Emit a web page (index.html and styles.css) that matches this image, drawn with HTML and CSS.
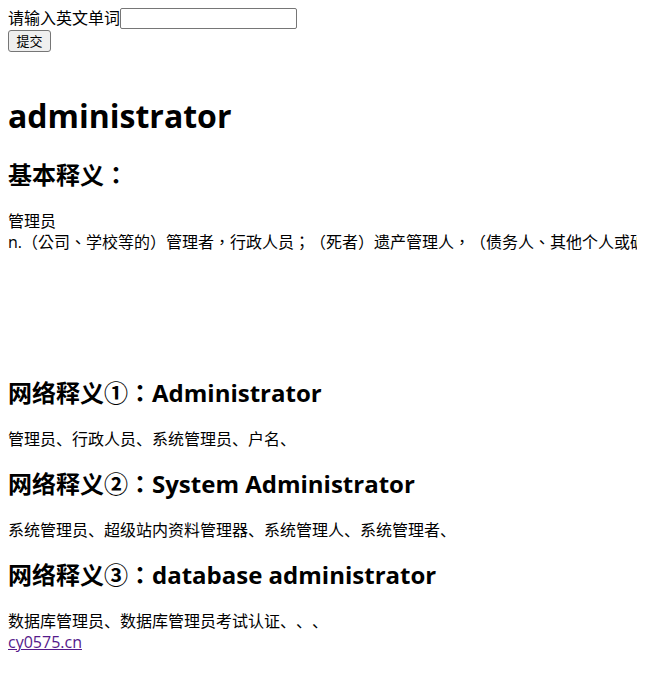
FILE: index.html
```html
<!DOCTYPE html>
<html>
<head>
<meta charset="utf-8">
<title>administrator</title>
<link rel="stylesheet" href="styles.css">
</head>
<body>
<form class="search">
  <div class="search-row">请输入英文单词<input class="word-input" type="text" name="word"></div>
  <button class="submit-btn" type="submit">提交</button>
</form>
<h1 class="word">administrator</h1>
<h2 class="section-title first">基本释义：</h2>
<p class="basic">管理员<br><span class="basic-line">n.（公司、学校等的）管理者，行政人员；（死者）遗产管理人，（债务人、其他个人或破产企业的）财产管理人</span></p>
<h2 class="section-title">网络释义①：Administrator</h2>
<p class="net">管理员、行政人员、系统管理员、户名、</p>
<h2 class="section-title">网络释义②：System Administrator</h2>
<p class="net">系统管理员、超级站内资料管理器、系统管理人、系统管理者、</p>
<h2 class="section-title">网络释义③：database administrator</h2>
<p class="net last">数据库管理员、数据库管理员考试认证、、、<br><a class="site-link" href="#">cy0575.cn</a></p>
</body>
</html>
```
FILE: styles.css
```css
html {
  overflow: hidden;
}
body {
  margin: 8px;
  font-family: "Open Sans", "Noto Sans CJK SC", sans-serif;
  font-size: 16px;
  line-height: 21px;
  color: #000;
  background: #fff;
  text-spacing-trim: space-all;
}
.search {
  margin: 0;
}
.search-row {
  display: flex;
  align-items: center;
  height: 21px;
}
.word-input {
  width: 177px;
  height: 21px;
  box-sizing: border-box;
  border: 1px solid #767676;
  border-radius: 2px;
  padding: 1px 2px;
  margin: 0;
  font-size: 13px;
}
.submit-btn {
  display: block;
  margin-top: 1px;
  width: 43px;
  height: 22px;
  padding: 0;
  box-sizing: border-box;
  border: 1px solid #767676;
  border-radius: 3px;
  background: #efefef;
  font-family: "Noto Sans CJK SC", sans-serif;
  font-size: 13px;
  line-height: 18px;
  color: #000;
}
.word {
  font-size: 32px;
  line-height: 42px;
  font-weight: bold;
  margin: 43px 0 0;
}
.section-title {
  font-family: "Open Sans", "Noto Sans CJK TC", sans-serif;
  font-size: 24px;
  line-height: 32px;
  font-weight: bold;
  margin: 18px 0 20px;
}
.section-title.first {
  margin: 22px 0 20px;
}
.basic {
  margin: 0 0 124px;
}
.basic-line {
  white-space: nowrap;
  font-family: "Open Sans", "Noto Sans CJK TC", sans-serif;
}
.net {
  margin: 16px 0;
}
.site-link {
  color: #551a8b;
  text-decoration: underline;
}
```
